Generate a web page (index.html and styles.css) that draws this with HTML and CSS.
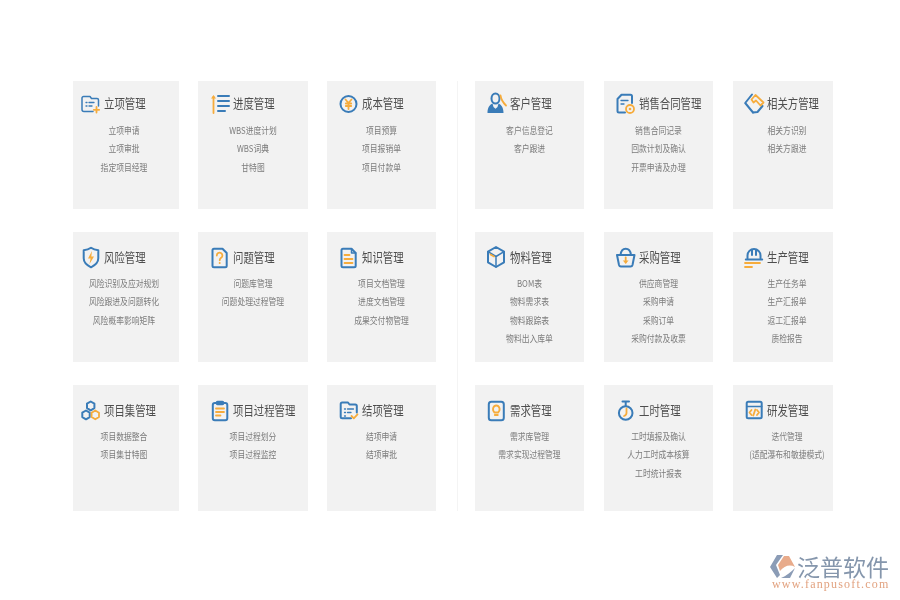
FILE: index.html
```html
<!DOCTYPE html>
<html lang="zh-CN">
<head>
<meta charset="utf-8">
<title>项目管理功能</title>
<link rel="stylesheet" href="styles.css">
</head>
<body>
<main class="board">
  <section class="group group-left">
    <article class="card c1 r1">
      <header class="head"><svg class="ico" viewBox="0 0 22 22"><path class="b" d="M12 19.500H3a2 2 0 0 1-2-2V6a1.500 1.500 0 0 1 1.500-1.500H9l1.500 2H16a1.500 1.500 0 0 1 1.500 1.500v6"/><path class="o2" d="M15.500 15v5.500M12.800 17.800h5.400"/><path class="b1" d="M5 10.500h1M8 10.500h5M5 14h1M8 14h3"/></svg><h2 class="title">立项管理</h2></header>
      <ul class="list"><li>立项申请</li><li>立项审批</li><li>指定项目经理</li></ul>
    </article>
    <article class="card c2 r1">
      <header class="head"><svg class="ico" viewBox="0 0 22 22"><path class="o2" d="M3.500 21V5"/><path class="of" d="M1 6.500 3.500 3 6 6.500z"/><path class="b2" d="M8 4h11M8 9h11M8 14h11M8 19h7"/></svg><h2 class="title">进度管理</h2></header>
      <ul class="list"><li>WBS进度计划</li><li>WBS词典</li><li>甘特图</li></ul>
    </article>
    <article class="card c3 r1">
      <header class="head"><svg class="ico" viewBox="0 0 22 22"><circle class="b2" cx="9.500" cy="12" r="8"/><path class="o2" d="M6.500 7.500 9.500 11l3-3.500M9.500 11v6M6.800 11.500h5.400M6.800 14h5.400"/></svg><h2 class="title">成本管理</h2></header>
      <ul class="list"><li>项目预算</li><li>项目报销单</li><li>项目付款单</li></ul>
    </article>
    <article class="card c1 r2">
      <header class="head"><svg class="ico" viewBox="0 0 22 22"><path class="b2" d="M10 1.800c2 1.500 4.500 2.300 7.300 2.500v8c0 4-3.200 7-7.300 9-4.100-2-7.300-5-7.300-9v-8c2.800-.2 5.300-1 7.300-2.500z"/><path class="of" d="M11 5 7 12.500h2.600L8.500 18l4.500-7.500h-2.700z"/></svg><h2 class="title">风险管理</h2></header>
      <ul class="list"><li>风险识别及应对规划</li><li>风险跟进及问题转化</li><li>风险概率影响矩阵</li></ul>
    </article>
    <article class="card c2 r2">
      <header class="head"><svg class="ico" viewBox="0 0 22 22"><path class="b2" d="M4 2.800h8.500l4.200 4.200v12.800a1.500 1.500 0 0 1-1.500 1.500H4a1.500 1.500 0 0 1-1.500-1.500V4.300A1.500 1.500 0 0 1 4 2.800z"/><path class="o2" d="M6.800 9.500a2.800 2.800 0 1 1 4.300 2.300c-1 .7-1.400 1.200-1.400 2.500"/><circle class="of" cx="9.700" cy="17" r="1"/></svg><h2 class="title">问题管理</h2></header>
      <ul class="list"><li>问题库管理</li><li>问题处理过程管理</li></ul>
    </article>
    <article class="card c3 r2">
      <header class="head"><svg class="ico" viewBox="0 0 22 22"><path class="b2" d="M4 2.800h8.500l4.200 4.200v12.800a1.500 1.500 0 0 1-1.500 1.500H4a1.500 1.500 0 0 1-1.500-1.500V4.300A1.500 1.500 0 0 1 4 2.800z"/><path class="b" d="M12.500 2.800V7h4.200"/><path class="o2" d="M5.500 9h5M5.500 13h8M5.500 17h8"/></svg><h2 class="title">知识管理</h2></header>
      <ul class="list"><li>项目文档管理</li><li>进度文档管理</li><li>成果交付物管理</li></ul>
    </article>
    <article class="card c1 r3">
      <header class="head"><svg class="ico" viewBox="0 0 22 22"><path class="b2" d="M9.700 2.500l3.700 2.200v4.400l-3.700 2.200-3.700-2.200V4.700zM5 11.500l3.700 2.200v4.400L5 20.300l-3.700-2.200v-4.400z"/><path class="o2" d="M14.300 11.500l3.700 2.200v4.400l-3.700 2.200-3.700-2.200v-4.400z"/></svg><h2 class="title">项目集管理</h2></header>
      <ul class="list"><li>项目数据整合</li><li>项目集甘特图</li></ul>
    </article>
    <article class="card c2 r3">
      <header class="head"><svg class="ico" viewBox="0 0 22 22"><rect class="b2" x="2.800" y="4" width="14.500" height="17.300" rx="2"/><rect class="b" x="6.500" y="2.500" width="7" height="3" rx="1"/><path class="o2" d="M6 9.500h8M6 13h8M6 16.500h4.500"/></svg><h2 class="title">项目过程管理</h2></header>
      <ul class="list"><li>项目过程划分</li><li>项目过程监控</li></ul>
    </article>
    <article class="card c3 r3">
      <header class="head"><svg class="ico" viewBox="0 0 22 22"><path class="b2" d="M12 19.300H3.200a1.500 1.500 0 0 1-1.500-1.500V5a1.500 1.500 0 0 1 1.500-1.500H9l1.500 2h5.800a1.500 1.500 0 0 1 1.500 1.500v6.500"/><path class="b1" d="M5.500 10h1M8.500 10h6M5.500 13.500h1M8.500 13.500h3.500M5.500 17h1"/><path class="o2" d="M12.500 17l2.300 2.300 3.700-4"/></svg><h2 class="title">结项管理</h2></header>
      <ul class="list"><li>结项申请</li><li>结项审批</li></ul>
    </article>
  </section>
  <div class="divider"></div>
  <section class="group group-right">
    <article class="card c4 r1">
      <header class="head"><svg class="ico" viewBox="0 0 22 22"><ellipse class="b2" cx="8.500" cy="6.500" rx="4" ry="5"/><path class="bf" d="M5.500 11.500C2.500 12.800.5 15.500.5 21h16c0-5.500-2-8.200-5-9.500l-1 3.500-2 1.700-2-1.700z"/><path class="o2" d="M13.500 3.500c.5 3.500 2.500 7 5.500 10"/></svg><h2 class="title">客户管理</h2></header>
      <ul class="list"><li>客户信息登记</li><li>客户跟进</li></ul>
    </article>
    <article class="card c5 r1">
      <header class="head"><svg class="ico" viewBox="0 0 22 22"><path class="b2" d="M9 20.500H3a1.500 1.500 0 0 1-1.500-1.500V7l4-4.300h9A1.500 1.500 0 0 1 16 4.200V11"/><path class="b1" d="M5 8.500h7M5 12h3"/><circle class="o2" cx="14" cy="17" r="4"/><circle class="of" cx="14" cy="17" r="1.300"/></svg><h2 class="title">销售合同管理</h2></header>
      <ul class="list"><li>销售合同记录</li><li>回款计划及确认</li><li>开票申请及办理</li></ul>
    </article>
    <article class="card c6 r1">
      <header class="head"><svg class="ico" viewBox="0 0 22 22"><path class="b2" d="M8 2.500 1.200 11 9 20.500"/><path class="b2" d="M9 20.500 13.500 20 18.500 14"/><path class="o2" d="M7.500 7.500 11.500 3 19.500 10.500 16.500 13.500 12 8.500 9.500 10.500z"/></svg><h2 class="title">相关方管理</h2></header>
      <ul class="list"><li>相关方识别</li><li>相关方跟进</li></ul>
    </article>
    <article class="card c4 r2">
      <header class="head"><svg class="ico" viewBox="0 0 22 22"><path class="b2" d="M9 1 17 5.700v10.600L9 21 1 16.300V5.700z"/><path class="b" d="M1 5.700 9 10.500 17 5.700M9 10.500V21"/><path class="o2" d="M3.500 8.500 7 10.500"/></svg><h2 class="title">物料管理</h2></header>
      <ul class="list"><li>BOM表</li><li>物料需求表</li><li>物料跟踪表</li><li>物料出入库单</li></ul>
    </article>
    <article class="card c5 r2">
      <header class="head"><svg class="ico" viewBox="0 0 22 22"><path class="b2" d="M1 9h17.500l-2 10a2 2 0 0 1-2 1.500H5a2 2 0 0 1-2-1.500z"/><path class="b2" d="M4.500 9C5 5 6.500 2.800 9.700 2.800S14.500 5 15 9"/><path class="o2" d="M9.700 11.500v5"/><path class="of" d="M6.800 14.500h5.800l-2.900 3.300z"/></svg><h2 class="title">采购管理</h2></header>
      <ul class="list"><li>供应商管理</li><li>采购申请</li><li>采购订单</li><li>采购付款及收票</li></ul>
    </article>
    <article class="card c6 r2">
      <header class="head"><svg class="ico" viewBox="0 0 22 22"><path class="b2" d="M3.500 12V9.500a6.500 6.500 0 0 1 13 0V12M8 3.500V9M12 3.500V9M1.800 13.500h16.400"/><path class="o2" d="M1 17h15M1 21h7"/></svg><h2 class="title">生产管理</h2></header>
      <ul class="list"><li>生产任务单</li><li>生产汇报单</li><li>返工汇报单</li><li>质检报告</li></ul>
    </article>
    <article class="card c4 r3">
      <header class="head"><svg class="ico" viewBox="0 0 22 22"><rect class="b2" x="1.800" y="2.800" width="15" height="18.500" rx="2.500"/><path class="o2" d="M7.500 13.500c-3-3-1-7 1.800-7s4.800 4 1.800 7zM7.800 16h3"/></svg><h2 class="title">需求管理</h2></header>
      <ul class="list"><li>需求库管理</li><li>需求实现过程管理</li></ul>
    </article>
    <article class="card c5 r3">
      <header class="head"><svg class="ico" viewBox="0 0 22 22"><circle class="b2" cx="9.700" cy="14" r="6.800"/><path class="b2" d="M6.500 2.500h6.500M9.700 2.500v4.500"/><path class="o2" d="M10.500 9.500v4.500c0 1.500-1 2.500-2.500 3"/></svg><h2 class="title">工时管理</h2></header>
      <ul class="list"><li>工时填报及确认</li><li>人力工时成本核算</li><li>工时统计报表</li></ul>
    </article>
    <article class="card c6 r3">
      <header class="head"><svg class="ico" viewBox="0 0 22 22"><rect class="b2" x="2.700" y="2.800" width="15" height="16.500" rx="1.500"/><path class="b" d="M2.700 7.500h15"/><path class="o2" d="M7.500 11 5.500 13.500 7.500 16M13 11l2 2.500-2 2.500M11.300 10.500 9.300 16.500"/></svg><h2 class="title">研发管理</h2></header>
      <ul class="list"><li>迭代管理</li><li>(适配瀑布和敏捷模式)</li></ul>
    </article>
  </section>
</main>
<aside class="logo">
  <svg class="logo-mark" viewBox="0 0 26 24"><path class="lg" d="M7 0h6L6 10l4 10-3 3-7-11z"/><path class="lo" d="M14 1h5l6 11c-5-3-11-1-15 4L8 10z"/><path class="lg" d="M25 13l-5 10H11c5-2 10-6 14-10z"/></svg>
  <div class="logo-text">
    <div class="logo-name">泛普软件</div>
    <div class="logo-url">www.fanpusoft.com</div>
  </div>
</aside>
</body>
</html>
```
FILE: styles.css
```css
* { box-sizing: border-box; }
html, body { margin: 0; padding: 0; background: #fff; }
body {
  width: 900px;
  height: 600px;
  position: relative;
  overflow: hidden;
  font-family: "Noto Sans CJK SC", "Liberation Sans", sans-serif;
}
.board {
  display: flex;
  align-items: stretch;
  padding: 81px 0 0 73px;
  filter: blur(.35px);
}
.group {
  display: grid;
  grid-template-rows: 128px 130px 126px;
  row-gap: 23px;
}
.group-left { grid-template-columns: 106px 110px 109px; column-gap: 19px; }
.group-right { grid-template-columns: 109px 109px 100px; column-gap: 20px; }
.divider { width: 1px; margin: 0 17px 0 20.500px; background: #f4f4f4; }
.card { background: #f2f2f2; min-width: 0; }
.head { display: flex; align-items: center; height: 22px; }
.ico { width: 22px; height: 22px; flex: none; margin-right: 1px; overflow: visible; }
.title {
  margin: 0;
  font-size: 13px;
  line-height: 22px;
  font-weight: 400;
  color: #4e4e4e;
  white-space: nowrap;
  transform: scaleX(.8);
  transform-origin: left center;
}
.list { margin: 0; padding: 0; list-style: none; }
.list li {
  font-size: 9.500px;
  line-height: 18.500px;
  color: #7c7c7c;
  text-align: center;
  white-space: nowrap;
  transform: scaleX(.82);
}
.r1 { padding-top: 11px; }
.r1 .list { margin-top: 6.500px; }
.r2, .r3 { padding-top: 14px; }
.r2 .list, .r3 .list { margin-top: 5.500px; }
.c1 .head { padding-left: 8px; }
.c2 .head, .c3 .head, .c4 .head, .c5 .head { padding-left: 12px; }
.c6 .head { padding-left: 11px; }
.c1 .list { padding-right: 4px; }
.c6 .list { padding-left: 8px; }
.b, .b1, .b2, .o2 { fill: none; stroke-linecap: round; stroke-linejoin: round; }
.b { stroke: #3a7cb8; stroke-width: 1.500; }
.b1 { stroke: #3a7cb8; stroke-width: 1.300; }
.b2 { stroke: #3a7cb8; stroke-width: 2; }
.o2 { stroke: #f6ac3c; stroke-width: 1.800; }
.of { fill: #f6ac3c; }
.bf { fill: #3a7cb8; }
.logo {
  position: absolute;
  left: 770px;
  top: 554px;
  display: flex;
  filter: blur(.4px);
}
.logo-mark { width: 26px; height: 24px; margin-top: 1px; flex: none; }
.lg { fill: #8b9cb6; }
.lo { fill: #e8ab8b; }
.logo-text { margin-left: -24px; padding-left: 25px; }
.logo-name {
  font-size: 23px;
  line-height: 25px;
  height: 25px;
  color: #8596ac;
  white-space: nowrap;
}
.logo-url {
  margin-left: -25px;
  font-family: "Liberation Serif", serif;
  font-size: 12px;
  line-height: 11px;
  letter-spacing: 1.190px;
  color: #e2a381;
  white-space: nowrap;
}
```
